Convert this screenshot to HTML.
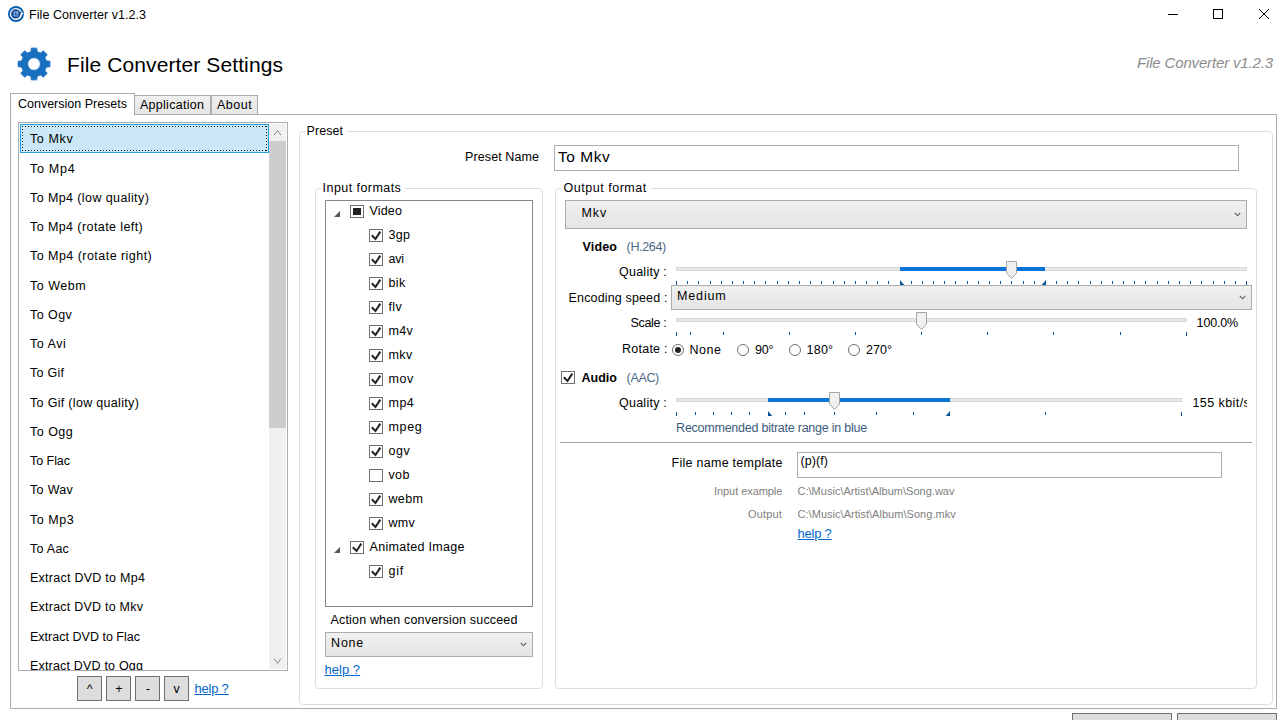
<!DOCTYPE html>
<html><head><meta charset="utf-8"><title>File Converter v1.2.3</title>
<style>
html,body{margin:0;padding:0;}
body{width:1280px;height:720px;overflow:hidden;background:#fff;position:relative;font-family:"Liberation Sans",sans-serif;}
.t{position:absolute;white-space:pre;}
.b{position:absolute;box-sizing:border-box;}
.grp{border:1px solid #d5dfe5;border-radius:4px;}
.cmb{border:1px solid #acacac;background:linear-gradient(#f0f0f0,#e5e5e5);}
.btn{border:1px solid #707070;background:#ddd;}
.cb{border:1px solid #707070;background:#fff;}
.tk{position:absolute;width:1px;background:#0f5296;}
svg{position:absolute;overflow:visible;}
</style></head><body>

<svg style="left:8px;top:6px" width="16" height="16" viewBox="0 0 16 16">
<circle cx="8" cy="8" r="7.05" fill="none" stroke="#0b5fb3" stroke-width="1.9"/>
<circle cx="7.7" cy="7.9" r="4.6" fill="#0e408c"/>
<path d="M9.6 3.9 L13.3 6.6 L11.8 9.4 Z" fill="#0e408c"/>
<rect x="5.5" y="5.2" width="4.9" height="5.4" rx="0.9" fill="#8db4de"/>
<path d="M6.7 6.2 V9.5 H9.6 V7.7 H8.2 V6.2 Z" fill="#2d62ab"/>
<path d="M12.4 7.3 L13.7 8.9 L15.6 7.3 L14.3 6.4 L13.6 7 Z" fill="#fff"/>
</svg>
<span class="t " style="left:29.10px;top:6.67px;font-size:12.5px;line-height:16px;letter-spacing:0.044px;color:#000;">File Converter v1.2.3</span>
<svg style="left:1160px;top:0" width="120" height="30" viewBox="0 0 120 30">
<path d="M8 14.5 H18" stroke="#000" stroke-width="1"/>
<rect x="53.5" y="9.5" width="9" height="9" fill="none" stroke="#000" stroke-width="1"/>
<path d="M99 9 L109 19 M109 9 L99 19" stroke="#000" stroke-width="1"/>
</svg>
<svg style="left:0;top:0" width="80" height="100"><path d="M30.94 51.67 L31.29 48.13 L36.71 48.13 L37.06 51.67 L40.55 53.12 L43.31 50.86 L47.14 54.69 L44.88 57.45 L46.33 60.94 L49.87 61.29 L49.87 66.71 L46.33 67.06 L44.88 70.55 L47.14 73.31 L43.31 77.14 L40.55 74.88 L37.06 76.33 L36.71 79.87 L31.29 79.87 L30.94 76.33 L27.45 74.88 L24.69 77.14 L20.86 73.31 L23.12 70.55 L21.67 67.06 L18.13 66.71 L18.13 61.29 L21.67 60.94 L23.12 57.45 L20.86 54.69 L24.69 50.86 L27.45 53.12 Z M40.40 64.00 A6.4 6.4 0 1 0 27.60 64.00 A6.4 6.4 0 1 0 40.40 64.00 Z" fill="#1a70c0" fill-rule="evenodd" stroke="#1a70c0" stroke-width="1" stroke-linejoin="round"/></svg>
<span class="t " style="left:67.10px;top:50.72px;font-size:21px;line-height:27px;letter-spacing:0.103px;color:#000;">File Converter Settings</span>
<span class="t " style="left:1137.00px;top:53.30px;font-size:15px;line-height:20px;letter-spacing:-0.158px;color:#8c8c8c;font-style:italic;">File Converter v1.2.3</span>
<div class="b" style="left:10px;top:114px;width:1267px;height:595px;border:1px solid #acacac;background:#fff;"></div>
<div class="b" style="left:134px;top:95px;width:77px;height:20px;border:1px solid #acacac;background:linear-gradient(#f0f0f0,#e5e5e5);"></div>
<div class="b" style="left:211px;top:95px;width:47px;height:20px;border:1px solid #acacac;background:linear-gradient(#f0f0f0,#e5e5e5);"></div>
<div class="b" style="left:10px;top:93px;width:125px;height:22px;border:1px solid #acacac;border-bottom:none;background:#fff;"></div>
<span class="t " style="left:18.00px;top:95.67px;font-size:12.5px;line-height:16px;letter-spacing:-0.005px;color:#000;">Conversion Presets</span>
<span class="t " style="left:140.00px;top:96.67px;font-size:12.5px;line-height:16px;letter-spacing:0.271px;color:#000;">Application</span>
<span class="t " style="left:217.00px;top:96.67px;font-size:12.5px;line-height:16px;letter-spacing:0.518px;color:#000;">About</span>
<div class="b" style="left:18px;top:122px;width:270px;height:549px;border:1px solid #abadb3;background:#fff;overflow:hidden;"></div>
<div class="b" style="left:20px;top:124px;width:249px;height:29px;border:1px solid #26a0da;background:#cbe8f6;"><svg style="left:1px;top:1px" width="245" height="25"><path d="M0 0.5 H245 M0 24.5 H245 M0.5 0 V25 M244.5 0 V25" fill="none" stroke="#1a1a1a" stroke-width="1" stroke-dasharray="1 2"/></svg></div>
<div class="b" style="left:19px;top:123px;width:250px;height:547px;overflow:hidden;">
<span class="t " style="left:11.00px;top:7.67px;font-size:12.5px;line-height:16px;letter-spacing:0.620px;color:#000;">To Mkv</span>
<span class="t " style="left:11.00px;top:37.67px;font-size:12.5px;line-height:16px;letter-spacing:0.729px;color:#000;">To Mp4</span>
<span class="t " style="left:11.00px;top:66.67px;font-size:12.5px;line-height:16px;letter-spacing:0.402px;color:#000;">To Mp4 (low quality)</span>
<span class="t " style="left:11.00px;top:95.67px;font-size:12.5px;line-height:16px;letter-spacing:0.415px;color:#000;">To Mp4 (rotate left)</span>
<span class="t " style="left:11.00px;top:124.67px;font-size:12.5px;line-height:16px;letter-spacing:0.461px;color:#000;">To Mp4 (rotate right)</span>
<span class="t " style="left:11.00px;top:154.67px;font-size:12.5px;line-height:16px;letter-spacing:0.529px;color:#000;">To Webm</span>
<span class="t " style="left:11.00px;top:183.67px;font-size:12.5px;line-height:16px;letter-spacing:0.436px;color:#000;">To Ogv</span>
<span class="t " style="left:11.00px;top:212.67px;font-size:12.5px;line-height:16px;letter-spacing:0.523px;color:#000;">To Avi</span>
<span class="t " style="left:11.00px;top:241.67px;font-size:12.5px;line-height:16px;letter-spacing:0.246px;color:#000;">To Gif</span>
<span class="t " style="left:11.00px;top:271.67px;font-size:12.5px;line-height:16px;letter-spacing:0.317px;color:#000;">To Gif (low quality)</span>
<span class="t " style="left:11.00px;top:300.67px;font-size:12.5px;line-height:16px;letter-spacing:0.491px;color:#000;">To Ogg</span>
<span class="t " style="left:11.00px;top:329.67px;font-size:12.5px;line-height:16px;letter-spacing:-0.045px;color:#000;">To Flac</span>
<span class="t " style="left:11.00px;top:358.67px;font-size:12.5px;line-height:16px;letter-spacing:0.325px;color:#000;">To Wav</span>
<span class="t " style="left:11.00px;top:388.67px;font-size:12.5px;line-height:16px;letter-spacing:0.547px;color:#000;">To Mp3</span>
<span class="t " style="left:11.00px;top:417.67px;font-size:12.5px;line-height:16px;letter-spacing:0.268px;color:#000;">To Aac</span>
<span class="t " style="left:11.00px;top:446.67px;font-size:12.5px;line-height:16px;letter-spacing:0.260px;color:#000;">Extract DVD to Mp4</span>
<span class="t " style="left:11.00px;top:475.67px;font-size:12.5px;line-height:16px;letter-spacing:0.226px;color:#000;">Extract DVD to Mkv</span>
<span class="t " style="left:11.00px;top:505.67px;font-size:12.5px;line-height:16px;letter-spacing:0.014px;color:#000;">Extract DVD to Flac</span>
<span class="t " style="left:11.00px;top:534.67px;font-size:12.5px;line-height:16px;letter-spacing:0.185px;color:#000;">Extract DVD to Ogg</span>
</div>
<div class="b" style="left:269px;top:124px;width:17px;height:545px;background:#f0f0f0;"></div>
<div class="b" style="left:269px;top:141px;width:17px;height:287px;background:#cdcdcd;"></div>
<svg style="left:269px;top:123px" width="17" height="547"><path d="M5.1 12.1 L8.5 7.5 L11.9 12.1" fill="none" stroke="#808080" stroke-width="1"/><path d="M5.1 535.7 L8.5 540.3 L11.9 535.7" fill="none" stroke="#808080" stroke-width="1"/></svg>
<div class="b btn" style="left:77px;top:676px;width:25px;height:25px;"></div>
<div class="b btn" style="left:106px;top:676px;width:25px;height:25px;"></div>
<div class="b btn" style="left:135px;top:676px;width:25px;height:25px;"></div>
<div class="b btn" style="left:164px;top:676px;width:25px;height:25px;"></div>
<span class="t " style="left:86.80px;top:680.87px;font-size:12.5px;line-height:16px;letter-spacing:0.000px;color:#000;">^</span>
<span class="t " style="left:115.30px;top:681.47px;font-size:12.5px;line-height:16px;letter-spacing:0.000px;color:#000;">+</span>
<span class="t " style="left:145.80px;top:681.47px;font-size:12.5px;line-height:16px;letter-spacing:0.000px;color:#000;">-</span>
<span class="t " style="left:173.60px;top:680.87px;font-size:12.5px;line-height:16px;letter-spacing:0.000px;color:#000;">v</span>
<span class="t " style="left:194.50px;top:679.50px;font-size:13px;line-height:17px;letter-spacing:-0.213px;color:#0066cc;text-decoration:underline;">help ?</span>
<div class="b grp" style="left:299px;top:131px;width:974px;height:574px;"></div>
<div class="b" style="left:304.5px;top:129px;width:42.5px;height:6px;background:#fff;"></div>
<span class="t " style="left:306.60px;top:122.67px;font-size:12.5px;line-height:16px;letter-spacing:0.066px;color:#000;">Preset</span>
<span class="t " style="left:465.10px;top:148.67px;font-size:12.5px;line-height:16px;letter-spacing:0.095px;color:#000;">Preset Name</span>
<div class="b" style="left:554px;top:145px;width:685px;height:26px;border:1px solid #abadb3;background:#fff;"></div>
<span class="t " style="left:558.00px;top:146.63px;font-size:15.5px;line-height:20px;letter-spacing:0.529px;color:#000;">To Mkv</span>
<div class="b grp" style="left:315px;top:188px;width:228px;height:501px;"></div>
<div class="b" style="left:320.5px;top:186px;width:84.5px;height:6px;background:#fff;"></div>
<span class="t " style="left:322.60px;top:179.67px;font-size:12.5px;line-height:16px;letter-spacing:0.439px;color:#000;">Input formats</span>
<div class="b" style="left:325px;top:200px;width:208px;height:407px;border:1px solid #828790;background:#fff;"></div>
<svg style="left:334px;top:211px" width="8" height="8"><path d="M6 0 V6 H0 Z" fill="#595959"/></svg>
<div class="b cb" style="left:350px;top:205px;width:14px;height:13px;"><div class="b" style="left:2px;top:2px;width:8px;height:7px;background:#212121;"></div></div>
<span class="t " style="left:369.50px;top:202.67px;font-size:12.5px;line-height:16px;letter-spacing:0.168px;color:#000;">Video</span>
<div class="b cb" style="left:369px;top:229px;width:14px;height:13px;"><svg style="left:-1px;top:-1px" width="14" height="13" viewBox="0 0 14 13"><path d="M2.8 6.3 L6.5 10 L11.3 2.6" fill="none" stroke="#212121" stroke-width="2"/></svg></div>
<span class="t " style="left:388.50px;top:226.67px;font-size:12.5px;line-height:16px;letter-spacing:0.257px;color:#000;">3gp</span>
<div class="b cb" style="left:369px;top:253px;width:14px;height:13px;"><svg style="left:-1px;top:-1px" width="14" height="13" viewBox="0 0 14 13"><path d="M2.8 6.3 L6.5 10 L11.3 2.6" fill="none" stroke="#212121" stroke-width="2"/></svg></div>
<span class="t " style="left:388.50px;top:250.67px;font-size:12.5px;line-height:16px;letter-spacing:-0.192px;color:#000;">avi</span>
<div class="b cb" style="left:369px;top:277px;width:14px;height:13px;"><svg style="left:-1px;top:-1px" width="14" height="13" viewBox="0 0 14 13"><path d="M2.8 6.3 L6.5 10 L11.3 2.6" fill="none" stroke="#212121" stroke-width="2"/></svg></div>
<span class="t " style="left:388.50px;top:274.67px;font-size:12.5px;line-height:16px;letter-spacing:0.408px;color:#000;">bik</span>
<div class="b cb" style="left:369px;top:301px;width:14px;height:13px;"><svg style="left:-1px;top:-1px" width="14" height="13" viewBox="0 0 14 13"><path d="M2.8 6.3 L6.5 10 L11.3 2.6" fill="none" stroke="#212121" stroke-width="2"/></svg></div>
<span class="t " style="left:388.50px;top:298.67px;font-size:12.5px;line-height:16px;letter-spacing:0.400px;color:#000;">flv</span>
<div class="b cb" style="left:369px;top:325px;width:14px;height:13px;"><svg style="left:-1px;top:-1px" width="14" height="13" viewBox="0 0 14 13"><path d="M2.8 6.3 L6.5 10 L11.3 2.6" fill="none" stroke="#212121" stroke-width="2"/></svg></div>
<span class="t " style="left:388.50px;top:322.67px;font-size:12.5px;line-height:16px;letter-spacing:0.354px;color:#000;">m4v</span>
<div class="b cb" style="left:369px;top:349px;width:14px;height:13px;"><svg style="left:-1px;top:-1px" width="14" height="13" viewBox="0 0 14 13"><path d="M2.8 6.3 L6.5 10 L11.3 2.6" fill="none" stroke="#212121" stroke-width="2"/></svg></div>
<span class="t " style="left:388.50px;top:346.67px;font-size:12.5px;line-height:16px;letter-spacing:0.435px;color:#000;">mkv</span>
<div class="b cb" style="left:369px;top:373px;width:14px;height:13px;"><svg style="left:-1px;top:-1px" width="14" height="13" viewBox="0 0 14 13"><path d="M2.8 6.3 L6.5 10 L11.3 2.6" fill="none" stroke="#212121" stroke-width="2"/></svg></div>
<span class="t " style="left:388.50px;top:370.67px;font-size:12.5px;line-height:16px;letter-spacing:0.554px;color:#000;">mov</span>
<div class="b cb" style="left:369px;top:397px;width:14px;height:13px;"><svg style="left:-1px;top:-1px" width="14" height="13" viewBox="0 0 14 13"><path d="M2.8 6.3 L6.5 10 L11.3 2.6" fill="none" stroke="#212121" stroke-width="2"/></svg></div>
<span class="t " style="left:388.50px;top:394.67px;font-size:12.5px;line-height:16px;letter-spacing:0.473px;color:#000;">mp4</span>
<div class="b cb" style="left:369px;top:421px;width:14px;height:13px;"><svg style="left:-1px;top:-1px" width="14" height="13" viewBox="0 0 14 13"><path d="M2.8 6.3 L6.5 10 L11.3 2.6" fill="none" stroke="#212121" stroke-width="2"/></svg></div>
<span class="t " style="left:388.50px;top:418.67px;font-size:12.5px;line-height:16px;letter-spacing:0.652px;color:#000;">mpeg</span>
<div class="b cb" style="left:369px;top:445px;width:14px;height:13px;"><svg style="left:-1px;top:-1px" width="14" height="13" viewBox="0 0 14 13"><path d="M2.8 6.3 L6.5 10 L11.3 2.6" fill="none" stroke="#212121" stroke-width="2"/></svg></div>
<span class="t " style="left:388.50px;top:442.67px;font-size:12.5px;line-height:16px;letter-spacing:0.538px;color:#000;">ogv</span>
<div class="b cb" style="left:369px;top:469px;width:14px;height:13px;"></div>
<span class="t " style="left:388.50px;top:466.67px;font-size:12.5px;line-height:16px;letter-spacing:0.338px;color:#000;">vob</span>
<div class="b cb" style="left:369px;top:493px;width:14px;height:13px;"><svg style="left:-1px;top:-1px" width="14" height="13" viewBox="0 0 14 13"><path d="M2.8 6.3 L6.5 10 L11.3 2.6" fill="none" stroke="#212121" stroke-width="2"/></svg></div>
<span class="t " style="left:388.50px;top:490.67px;font-size:12.5px;line-height:16px;letter-spacing:0.330px;color:#000;">webm</span>
<div class="b cb" style="left:369px;top:517px;width:14px;height:13px;"><svg style="left:-1px;top:-1px" width="14" height="13" viewBox="0 0 14 13"><path d="M2.8 6.3 L6.5 10 L11.3 2.6" fill="none" stroke="#212121" stroke-width="2"/></svg></div>
<span class="t " style="left:388.50px;top:514.67px;font-size:12.5px;line-height:16px;letter-spacing:0.324px;color:#000;">wmv</span>
<svg style="left:334px;top:547px" width="8" height="8"><path d="M6 0 V6 H0 Z" fill="#595959"/></svg>
<div class="b cb" style="left:350px;top:541px;width:14px;height:13px;"><svg style="left:-1px;top:-1px" width="14" height="13" viewBox="0 0 14 13"><path d="M2.8 6.3 L6.5 10 L11.3 2.6" fill="none" stroke="#212121" stroke-width="2"/></svg></div>
<span class="t " style="left:369.50px;top:538.67px;font-size:12.5px;line-height:16px;letter-spacing:0.294px;color:#000;">Animated Image</span>
<div class="b cb" style="left:369px;top:565px;width:14px;height:13px;"><svg style="left:-1px;top:-1px" width="14" height="13" viewBox="0 0 14 13"><path d="M2.8 6.3 L6.5 10 L11.3 2.6" fill="none" stroke="#212121" stroke-width="2"/></svg></div>
<span class="t " style="left:388.50px;top:562.67px;font-size:12.5px;line-height:16px;letter-spacing:0.719px;color:#000;">gif</span>
<span class="t " style="left:330.50px;top:611.67px;font-size:12.5px;line-height:16px;letter-spacing:0.168px;color:#000;">Action when conversion succeed</span>
<div class="b cmb" style="left:325px;top:632px;width:208px;height:25px;"></div>
<span class="t " style="left:331.10px;top:634.67px;font-size:12.5px;line-height:16px;letter-spacing:0.769px;color:#000;">None</span>
<svg style="left:520px;top:641.5px" width="8" height="6"><path d="M0.8 0.8 L3.5 3.8 L6.2 0.8" fill="none" stroke="#555" stroke-width="1.05"/></svg>
<span class="t " style="left:324.50px;top:661.00px;font-size:13px;line-height:17px;letter-spacing:0.033px;color:#0066cc;text-decoration:underline;">help ?</span>
<div class="b grp" style="left:555px;top:188px;width:702px;height:501px;"></div>
<div class="b" style="left:560.5px;top:186px;width:90.0px;height:6px;background:#fff;"></div>
<span class="t " style="left:563.50px;top:179.67px;font-size:12.5px;line-height:16px;letter-spacing:0.526px;color:#000;">Output format</span>
<div class="b cmb" style="left:565px;top:200px;width:682px;height:29px;"></div>
<span class="t " style="left:581.50px;top:204.67px;font-size:12.5px;line-height:16px;letter-spacing:0.885px;color:#000;">Mkv</span>
<svg style="left:1234px;top:211.5px" width="8" height="6"><path d="M0.8 0.8 L3.5 3.8 L6.2 0.8" fill="none" stroke="#555" stroke-width="1.05"/></svg>
<span class="t " style="left:582.50px;top:238.67px;font-size:12.5px;line-height:16px;letter-spacing:0.154px;color:#000;font-weight:bold;">Video</span>
<span class="t " style="left:626.60px;top:238.67px;font-size:12.5px;line-height:16px;letter-spacing:-0.340px;color:#4a6785;">(H.264)</span>
<span class="t " style="left:619.00px;top:263.67px;font-size:12.5px;line-height:16px;letter-spacing:0.248px;color:#000;">Quality :</span>
<span class="t " style="left:568.60px;top:289.67px;font-size:12.5px;line-height:16px;letter-spacing:0.146px;color:#000;">Encoding speed :</span>
<span class="t " style="left:630.60px;top:314.67px;font-size:12.5px;line-height:16px;letter-spacing:-0.345px;color:#000;">Scale :</span>
<span class="t " style="left:622.10px;top:340.97px;font-size:12.5px;line-height:16px;letter-spacing:0.221px;color:#000;">Rotate :</span>
<div class="b" style="left:676px;top:267px;width:571px;height:4px;background:#e7eaea;border:1px solid #d6d6d6;"></div>
<div class="b" style="left:900px;top:267px;width:145px;height:4px;background:#0a73d8;"></div>
<div class="tk" style="left:676.0px;top:280.5px;height:4px"></div>
<div class="tk" style="left:687.2px;top:281px;height:3px"></div>
<div class="tk" style="left:698.4px;top:281px;height:3px"></div>
<div class="tk" style="left:709.5px;top:281px;height:3px"></div>
<div class="tk" style="left:720.7px;top:281px;height:3px"></div>
<div class="tk" style="left:731.9px;top:281px;height:3px"></div>
<div class="tk" style="left:743.1px;top:281px;height:3px"></div>
<div class="tk" style="left:754.2px;top:281px;height:3px"></div>
<div class="tk" style="left:765.4px;top:281px;height:3px"></div>
<div class="tk" style="left:776.6px;top:281px;height:3px"></div>
<div class="tk" style="left:787.8px;top:281px;height:3px"></div>
<div class="tk" style="left:798.9px;top:281px;height:3px"></div>
<div class="tk" style="left:810.1px;top:281px;height:3px"></div>
<div class="tk" style="left:821.3px;top:281px;height:3px"></div>
<div class="tk" style="left:832.5px;top:281px;height:3px"></div>
<div class="tk" style="left:843.6px;top:281px;height:3px"></div>
<div class="tk" style="left:854.8px;top:281px;height:3px"></div>
<div class="tk" style="left:866.0px;top:281px;height:3px"></div>
<div class="tk" style="left:877.2px;top:281px;height:3px"></div>
<div class="tk" style="left:888.4px;top:281px;height:3px"></div>
<div class="tk" style="left:899.5px;top:281px;height:3px"></div>
<div class="tk" style="left:910.7px;top:281px;height:3px"></div>
<div class="tk" style="left:921.9px;top:281px;height:3px"></div>
<div class="tk" style="left:933.1px;top:281px;height:3px"></div>
<div class="tk" style="left:944.2px;top:281px;height:3px"></div>
<div class="tk" style="left:955.4px;top:281px;height:3px"></div>
<div class="tk" style="left:966.6px;top:281px;height:3px"></div>
<div class="tk" style="left:977.8px;top:281px;height:3px"></div>
<div class="tk" style="left:988.9px;top:281px;height:3px"></div>
<div class="tk" style="left:1000.1px;top:281px;height:3px"></div>
<div class="tk" style="left:1011.3px;top:281px;height:3px"></div>
<div class="tk" style="left:1022.5px;top:281px;height:3px"></div>
<div class="tk" style="left:1033.6px;top:281px;height:3px"></div>
<div class="tk" style="left:1044.8px;top:281px;height:3px"></div>
<div class="tk" style="left:1056.0px;top:281px;height:3px"></div>
<div class="tk" style="left:1067.2px;top:281px;height:3px"></div>
<div class="tk" style="left:1078.4px;top:281px;height:3px"></div>
<div class="tk" style="left:1089.5px;top:281px;height:3px"></div>
<div class="tk" style="left:1100.7px;top:281px;height:3px"></div>
<div class="tk" style="left:1111.9px;top:281px;height:3px"></div>
<div class="tk" style="left:1123.1px;top:281px;height:3px"></div>
<div class="tk" style="left:1134.2px;top:281px;height:3px"></div>
<div class="tk" style="left:1145.4px;top:281px;height:3px"></div>
<div class="tk" style="left:1156.6px;top:281px;height:3px"></div>
<div class="tk" style="left:1167.8px;top:281px;height:3px"></div>
<div class="tk" style="left:1178.9px;top:281px;height:3px"></div>
<div class="tk" style="left:1190.1px;top:281px;height:3px"></div>
<div class="tk" style="left:1201.3px;top:281px;height:3px"></div>
<div class="tk" style="left:1212.5px;top:281px;height:3px"></div>
<div class="tk" style="left:1223.6px;top:281px;height:3px"></div>
<div class="tk" style="left:1234.8px;top:281px;height:3px"></div>
<div class="tk" style="left:1246.0px;top:280.5px;height:4px"></div>
<svg style="left:900px;top:280px" width="5" height="5"><path d="M0 0 V5 H4.3 Z" fill="#0f5296"/></svg>
<svg style="left:1041px;top:280px" width="5" height="5"><path d="M5 0 V5 H0.7 Z" fill="#0f5296"/></svg>
<svg style="left:1006px;top:261px" width="11" height="19"><path d="M0.5 0.5 H10.5 V12 L5.5 17.6 L0.5 12 Z" fill="#f0f0f0" stroke="#a6a6a6" stroke-width="1"/></svg>
<div class="b cmb" style="left:671px;top:285px;width:581px;height:25px;"></div>
<span class="t " style="left:677.10px;top:287.67px;font-size:12.5px;line-height:16px;letter-spacing:0.822px;color:#000;">Medium</span>
<svg style="left:1239px;top:294.5px" width="8" height="6"><path d="M0.8 0.8 L3.5 3.8 L6.2 0.8" fill="none" stroke="#555" stroke-width="1.05"/></svg>
<div class="b" style="left:676px;top:318px;width:511px;height:4px;background:#e7eaea;border:1px solid #d6d6d6;"></div>
<div class="tk" style="left:676.0px;top:331.5px;height:4px"></div>
<div class="tk" style="left:690.0px;top:332px;height:3px"></div>
<div class="tk" style="left:723.0px;top:332px;height:3px"></div>
<div class="tk" style="left:789.0px;top:332px;height:3px"></div>
<div class="tk" style="left:855.0px;top:332px;height:3px"></div>
<div class="tk" style="left:921.0px;top:332px;height:3px"></div>
<div class="tk" style="left:987.0px;top:332px;height:3px"></div>
<div class="tk" style="left:1053.0px;top:332px;height:3px"></div>
<div class="tk" style="left:1120.0px;top:332px;height:3px"></div>
<div class="tk" style="left:1186.0px;top:331.5px;height:4px"></div>
<svg style="left:916px;top:312px" width="11" height="19"><path d="M0.5 0.5 H10.5 V12 L5.5 17.6 L0.5 12 Z" fill="#f0f0f0" stroke="#a6a6a6" stroke-width="1"/></svg>
<span class="t " style="left:1196.60px;top:314.67px;font-size:12.5px;line-height:16px;letter-spacing:-0.165px;color:#000;">100.0%</span>
<div class="b" style="left:672px;top:344px;width:12px;height:12px;border:1px solid #707070;border-radius:50%;background:#fff;"><div class="b" style="left:2px;top:2px;width:6px;height:6px;border-radius:50%;background:#212121;"></div></div>
<div class="b" style="left:737px;top:344px;width:12px;height:12px;border:1px solid #707070;border-radius:50%;background:#fff;"></div>
<div class="b" style="left:789px;top:344px;width:12px;height:12px;border:1px solid #707070;border-radius:50%;background:#fff;"></div>
<div class="b" style="left:848px;top:344px;width:12px;height:12px;border:1px solid #707070;border-radius:50%;background:#fff;"></div>
<span class="t " style="left:689.60px;top:341.67px;font-size:12.5px;line-height:16px;letter-spacing:0.476px;color:#000;">None</span>
<span class="t " style="left:755.00px;top:341.67px;font-size:12.5px;line-height:16px;letter-spacing:-0.161px;color:#000;">90°</span>
<span class="t " style="left:806.60px;top:341.67px;font-size:12.5px;line-height:16px;letter-spacing:0.198px;color:#000;">180°</span>
<span class="t " style="left:866.00px;top:341.67px;font-size:12.5px;line-height:16px;letter-spacing:0.041px;color:#000;">270°</span>
<div class="b cb" style="left:561px;top:371px;width:14px;height:13px;"><svg style="left:-1px;top:-1px" width="14" height="13" viewBox="0 0 14 13"><path d="M2.8 6.3 L6.5 10 L11.3 2.6" fill="none" stroke="#212121" stroke-width="2"/></svg></div>
<span class="t " style="left:581.50px;top:369.67px;font-size:12.5px;line-height:16px;letter-spacing:0.021px;color:#000;font-weight:bold;">Audio</span>
<span class="t " style="left:626.60px;top:369.67px;font-size:12.5px;line-height:16px;letter-spacing:-0.337px;color:#4a6785;">(AAC)</span>
<span class="t " style="left:619.00px;top:395.17px;font-size:12.5px;line-height:16px;letter-spacing:0.248px;color:#000;">Quality :</span>
<div class="b" style="left:676px;top:398px;width:506px;height:4px;background:#e7eaea;border:1px solid #d6d6d6;"></div>
<div class="b" style="left:768px;top:398px;width:182px;height:4px;background:#0a73d8;"></div>
<div class="tk" style="left:676.0px;top:411.5px;height:4px"></div>
<div class="tk" style="left:695.0px;top:412px;height:3px"></div>
<div class="tk" style="left:713.0px;top:412px;height:3px"></div>
<div class="tk" style="left:731.0px;top:412px;height:3px"></div>
<div class="tk" style="left:749.0px;top:412px;height:3px"></div>
<div class="tk" style="left:785.0px;top:412px;height:3px"></div>
<div class="tk" style="left:804.0px;top:412px;height:3px"></div>
<div class="tk" style="left:834.0px;top:412px;height:3px"></div>
<div class="tk" style="left:876.0px;top:412px;height:3px"></div>
<div class="tk" style="left:913.0px;top:412px;height:3px"></div>
<div class="tk" style="left:1045.0px;top:412px;height:3px"></div>
<div class="tk" style="left:1181.0px;top:411.5px;height:4px"></div>
<svg style="left:768px;top:411px" width="5" height="5"><path d="M0 0 V5 H4.3 Z" fill="#0f5296"/></svg>
<svg style="left:945px;top:411px" width="5" height="5"><path d="M5 0 V5 H0.7 Z" fill="#0f5296"/></svg>
<svg style="left:829px;top:392px" width="11" height="19"><path d="M0.5 0.5 H10.5 V12 L5.5 17.6 L0.5 12 Z" fill="#f0f0f0" stroke="#a6a6a6" stroke-width="1"/></svg>
<div class="b" style="left:1190px;top:390px;width:57px;height:26px;overflow:hidden;">
<span class="t " style="left:2.50px;top:5.17px;font-size:12.5px;line-height:16px;letter-spacing:0.421px;color:#000;">155 kbit/s</span>
</div>
<span class="t " style="left:676.10px;top:419.67px;font-size:12.5px;line-height:16px;letter-spacing:-0.241px;color:#3b5b7d;">Recommended bitrate range in blue</span>
<div class="b" style="left:560px;top:442px;width:692px;height:1px;background:#a0a0a0;"></div>
<span class="t " style="left:671.60px;top:454.67px;font-size:12.5px;line-height:16px;letter-spacing:0.264px;color:#000;">File name template</span>
<div class="b" style="left:797px;top:452px;width:425px;height:26px;border:1px solid #abadb3;background:#fff;"></div>
<span class="t " style="left:800.50px;top:452.67px;font-size:12.5px;line-height:16px;letter-spacing:0.077px;color:#000;">(p)(f)</span>
<span class="t " style="left:714.00px;top:484.19px;font-size:11px;line-height:14px;letter-spacing:-0.064px;color:#808080;">Input example</span>
<span class="t " style="left:797.50px;top:484.19px;font-size:11px;line-height:14px;letter-spacing:0.017px;color:#808080;">C:\Music\Artist\Album\Song.wav</span>
<span class="t " style="left:748.00px;top:507.19px;font-size:11px;line-height:14px;letter-spacing:0.177px;color:#808080;">Output</span>
<span class="t " style="left:797.50px;top:507.19px;font-size:11px;line-height:14px;letter-spacing:0.039px;color:#808080;">C:\Music\Artist\Album\Song.mkv</span>
<span class="t " style="left:797.50px;top:525.00px;font-size:13px;line-height:17px;letter-spacing:-0.213px;color:#0066cc;text-decoration:underline;">help ?</span>
<div class="b" style="left:1072px;top:713px;width:100px;height:27px;border:1px solid #707070;background:#ddd;"></div>
<div class="b" style="left:1177px;top:713px;width:100px;height:27px;border:1px solid #707070;background:#ddd;"></div>
</body></html>
